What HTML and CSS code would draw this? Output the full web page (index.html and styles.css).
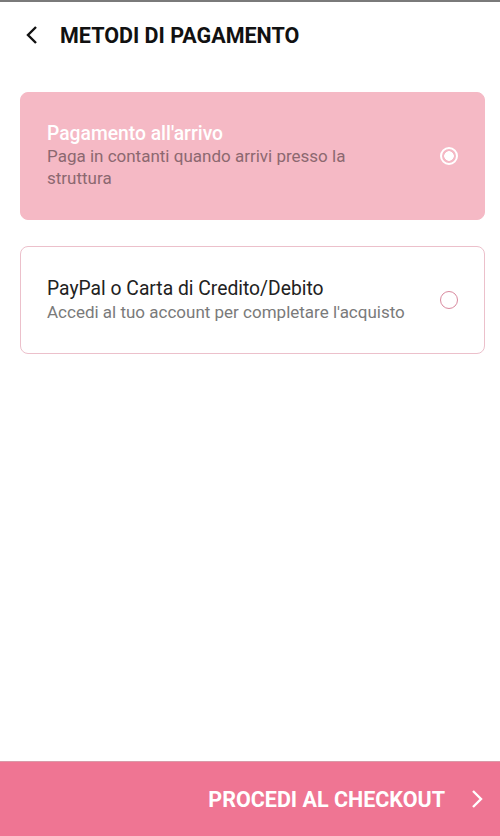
FILE: index.html
```html
<!DOCTYPE html>
<html lang="it">
<head>
  <meta charset="UTF-8">
  <title>Metodi di pagamento</title>
  <link rel="stylesheet" href="styles.css">
</head>
<body>
  <div class="screen">
    <div class="header">
      <svg class="back" width="14" height="20" viewBox="0 0 14 20">
        <path d="M11 2 L3 10 L11 18" fill="none" stroke="#111" stroke-width="2.4"/>
      </svg>
      <div class="title">METODI DI PAGAMENTO</div>
    </div>

    <div class="methods">
      <div class="method selected">
        <div class="text">
          <div class="name">Pagamento all'arrivo</div>
          <div class="desc">Paga in contanti quando arrivi presso la struttura</div>
        </div>
        <div class="radio"></div>
      </div>

      <div class="method">
        <div class="text">
          <div class="name">PayPal o Carta di Credito/Debito</div>
          <div class="desc">Accedi al tuo account per completare l'acquisto</div>
        </div>
        <div class="radio"></div>
      </div>
    </div>

    <div class="checkout">
      <span>PROCEDI AL CHECKOUT</span>
      <svg width="12" height="20" viewBox="0 0 12 20">
        <path d="M2 2 L10 10 L2 18" fill="none" stroke="#fff" stroke-width="2.4"/>
      </svg>
    </div>
  </div>
</body>
</html>
```

FILE: styles.css
```css
body {
  margin: 0;
  font-family: Roboto, "Liberation Sans", sans-serif;
  background-color: #fff;
}

.screen {
  height: 836px;
  display: flex;
  flex-direction: column;
  border-top: 2px solid #7a7a7a;
  box-sizing: border-box;
}

.header {
  display: flex;
  align-items: center;
  height: 66px;
  padding-left: 25px;
  gap: 21px;
}

.title {
  font-size: 21.5px;
  font-weight: bold;
  color: #111;
}

.methods {
  display: flex;
  flex-direction: column;
  gap: 26px;
  margin: 24px 15px 0 20px;
}

.method {
  display: flex;
  align-items: center;
  padding: 30px 26px;
  border: 1px solid #ecc0cb;
  border-radius: 8px;
}

.method .text {
  flex: 1;
  padding-right: 32px;
}

.method .name {
  font-size: 19.3px;
  line-height: 24px;
  color: #222;
}

.method .desc {
  font-size: 17px;
  line-height: 22px;
  color: #7a7a7a;
}

.method .radio {
  width: 18px;
  height: 18px;
  border: 1.5px solid #d9899e;
  border-radius: 50%;
  box-sizing: border-box;
}

.method.selected {
  background-color: #f5b9c5;
  border-color: #f5b9c5;
}

.method.selected .name {
  color: #fff;
  font-weight: 500;
  line-height: 22px;
}

.method.selected .desc {
  color: #8c6870;
}

.method.selected .radio {
  border: 2px solid #fff;
  background: radial-gradient(circle, #fff 0 4.5px, transparent 5px);
}

.checkout {
  margin-top: auto;
  height: 74px;
  background-color: #ef7593;
  border-top: 1px solid #d99aa8;
  display: flex;
  align-items: center;
  justify-content: flex-end;
  gap: 26px;
  padding-right: 17px;
  color: #fff;
  font-size: 21.5px;
  font-weight: bold;
}
```
